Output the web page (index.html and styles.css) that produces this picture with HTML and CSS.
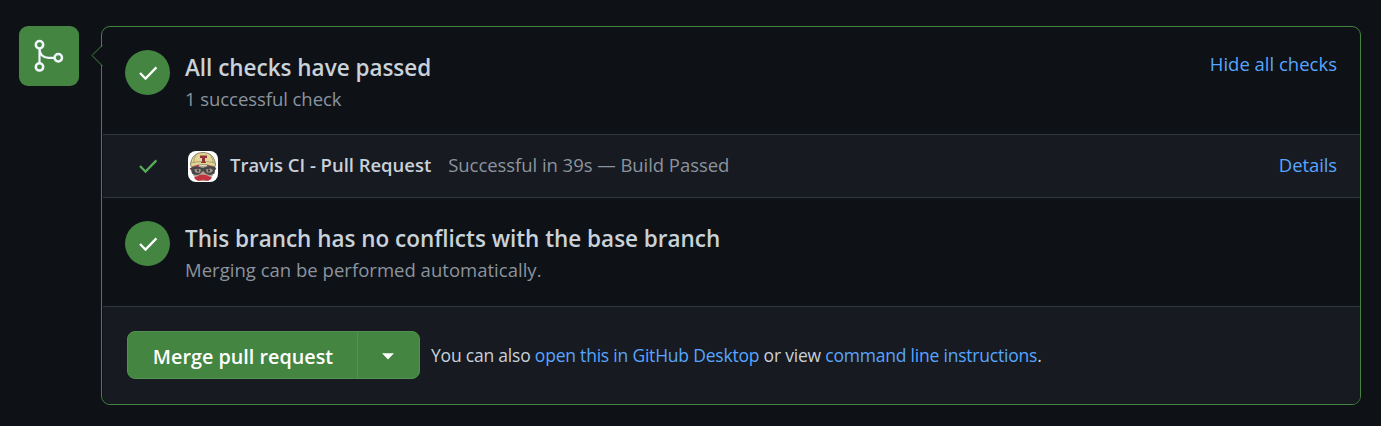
FILE: index.html
```html
<!DOCTYPE html>
<html lang="en">
<head>
<meta charset="utf-8">
<title>Merge pull request</title>
<link rel="stylesheet" href="styles.css">
</head>
<body>
<main class="merge">
  <div class="badge">
    <svg width="60" height="60" viewBox="0 0 60 60" fill="none" stroke="#f0f6fc" stroke-width="2.5">
      <circle cx="20.5" cy="18.8" r="3.7"/><circle cx="20.5" cy="40.9" r="3.7"/><circle cx="39.3" cy="31.8" r="3.7"/>
      <path stroke-width="2.2" d="M20.5 22.5v14.7M20.5 22.5c0 6 4 9.4 9 9.4h6"/>
    </svg>
  </div>
  <section class="panel">
    <svg class="pointer" width="12" height="24" viewBox="0 0 12 24"><path d="M12 1.5L1.5 12 12 22.5z" fill="#0e1116"/><path d="M11.5 1L1 11.5 11.5 22" fill="none" stroke="#438440"/></svg>
    <div class="row status first">
      <div class="circle"><svg width="20" height="16" viewBox="0 0 20 16"><path d="M2 8l5.5 5.5L18.4 2.4"/></svg></div>
      <div class="text"><h2>All checks have passed</h2><p class="count">1 successful check</p></div>
      <a class="link hide">Hide all checks</a>
    </div>
    <div class="row check">
      <svg class="tick" width="20" height="16" viewBox="0 0 20 16"><path d="M2 8l5.5 5.5L18.4 2.4"/></svg>
      <svg class="avatar" width="30" height="31" viewBox="0 0 30 31">
        <rect width="30" height="31" rx="8" fill="#fff"/>
        <path d="M4 15h22l-1 9-5 6H10l-5-6z" fill="#b5a193"/>
        <path d="M2.5 14C3 6 8 1.5 15 1.5S27 6 27.5 14l-1 2c-8-3-15-3-23 0z" fill="#e2d595" stroke="#75694b" stroke-width=".8"/>
        <path d="M9 3c-3 3-3 6-3 9M22 3c2 3 3 6 3 9M3 12c8-2 16-2 24 0" fill="none" stroke="#a2966a" stroke-width=".8"/>
        <path d="M12 4.5h7v2.5h-2v4h1v1h-5v-1h1V7h-2z" fill="#8f343b"/>
        <path d="M2 18l9-3.5M19 14.5l9 3.5" stroke="#a9373f" stroke-width="1.4"/>
        <path d="M2.5 17c4-2 8-2 12.5 0 4-2 8-2 12.5-1l-1 6.500c-3 2-7 2-10-1l-1.500-1.500-2 2c-2 2.500-7 2.500-9 .5z" fill="#48484a"/>
        <path d="M6 18.500l5-.8 2 1-1 3H8zM18 18.500l5-1 2 2-2 2h-4z" fill="#a8988a"/>
        <path d="M9 18.500h2v2H9zM20 18.500h2v2h-2z" fill="#383a3c"/>
        <path d="M15 24c4-1 5 2 9 2.500-1 2.500-3.500 3.500-6 3l-3-.7-3 .7c-2.500.5-5-.5-6-3 4-.5 5-3.500 9-2.500z" fill="#c23341"/>
      </svg>
      <strong>Travis CI - Pull Request</strong>
      <span class="result">Successful in 39s — Build Passed</span>
      <a class="link details">Details</a>
    </div>
    <div class="row status">
      <div class="circle"><svg width="20" height="16" viewBox="0 0 20 16"><path d="M2 8l5.5 5.5L18.4 2.4"/></svg></div>
      <div class="text"><h2>This branch has no conflicts with the base branch</h2><p>Merging can be performed automatically.</p></div>
    </div>
    <div class="row actions">
      <div class="buttons">
        <button class="main">Merge pull request</button>
        <button class="more" aria-label="Select merge method"><svg width="12" height="7" viewBox="0 0 12 7"><path d="M0 .3h12L6 6.5z" fill="#fff"/></svg></button>
      </div>
      <p class="also">You can also <a class="link">open this in GitHub Desktop</a> or view <a class="link">command line instructions</a>.</p>
    </div>
  </section>
</main>
</body>
</html>
```
FILE: styles.css
```css
* { box-sizing: border-box; }
body { margin: 0; background: #0e1116; color: #c9d1d9; font-family: "Open Sans", "Noto Sans", sans-serif; font-size: 18.5px; line-height: 28px; }
h2, p { margin: 0; white-space: nowrap; }
.merge { display: flex; gap: 22px; padding: 26px 20px 21px 19px; height: 426px; }
.badge { width: 60px; height: 60px; border-radius: 9px; background: #448541; flex: none; }
.badge svg { display: block; }
.panel { position: relative; flex: 1; border: 1px solid #438440; border-radius: 9px; height: 379px; display: flex; flex-direction: column; }
.pointer { position: absolute; left: -11px; top: 17px; }
.row { display: flex; border-bottom: 1px solid #30363d; margin-left: 1px; white-space: nowrap; }
.status { height: 109px; padding: 23px 23px 0 22px; }
.first { height: 108px; }
.circle { width: 45px; height: 45px; border-radius: 50%; background: #448541; display: flex; align-items: center; justify-content: center; flex: none; }
.circle path, .tick path { fill: none; stroke: #fff; stroke-width: 2.3; }
.tick path { stroke: #57ab5a; }
.text { margin-left: 15px; padding-top: 2px; }
h2 { font-size: 22.5px; font-weight: 600; line-height: 32px; letter-spacing: -0.02px; }
.text p { color: #8b949e; line-height: 30px; letter-spacing: 0.02px; }
.text .count { letter-spacing: -0.06px; }
.link { color: #58a6ff; text-decoration: none; }
.hide { margin-left: auto; }
.check { height: 63px; align-items: center; background: #171a21; padding: 0 23px 0 35px; }
.avatar { margin-left: 30px; }
.check strong { margin-left: 12px; font-weight: 600; letter-spacing: -0.03px; }
.result { margin-left: 17px; color: #8b949e; letter-spacing: -0.05px; }
.details { margin-left: auto; letter-spacing: -0.1px; }
.check strong, .result, .details { padding-bottom: 2px; }
.actions { flex: 1; border: 0; background: #171a21; border-radius: 0 0 8px 8px; padding: 24px 0 0 24px; }
.buttons { display: flex; width: 293px; height: 48px; border: 1px solid #529151; border-radius: 8px; background: #448541; overflow: hidden; }
.buttons button { border: 0; background: none; color: #fff; font: inherit; padding: 0; display: flex; align-items: center; justify-content: center; }
.buttons .main { width: 230px; border-right: 1px solid #529151; font-size: 19.8px; font-weight: 600; white-space: nowrap; padding: 3px 0 0 1px; }
.buttons .more { flex: 1; padding: 3px 2px 0 0; }
.also { margin-left: 11px; padding-top: 10px; font-size: 17.5px; letter-spacing: -0.21px; }
```
